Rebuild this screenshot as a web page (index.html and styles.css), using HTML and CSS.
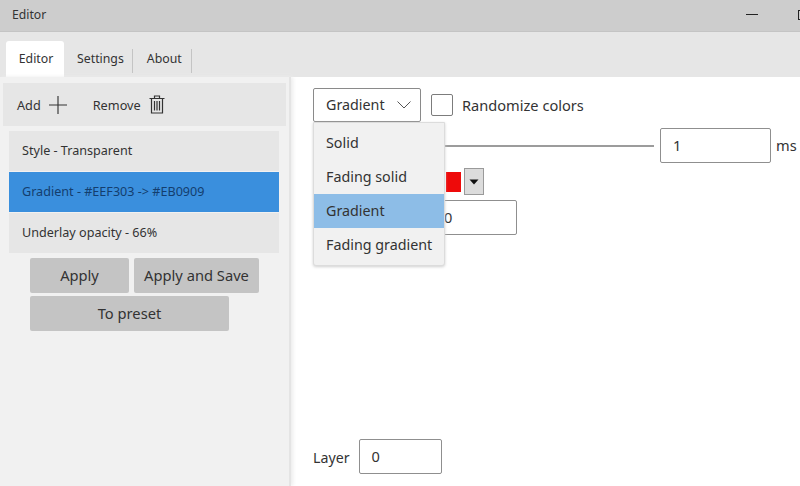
FILE: index.html
```html
<!DOCTYPE html>
<html lang="en">
<head>
<meta charset="utf-8">
<title>Editor</title>
<link rel="stylesheet" href="styles.css">
</head>
<body>
<div class="window">
  <header class="titlebar">
    <span class="title">Editor</span>
    <span class="win-controls"><span class="win-min"></span><span class="win-max"></span></span>
  </header>
  <nav class="tabs">
    <span class="tab active">Editor</span>
    <span class="tab sep">Settings</span>
    <span class="tab sep">About</span>
  </nav>
  <div class="content">
    <aside class="sidebar">
      <div class="toolbar">
        <span class="tool tool-add">Add
          <svg class="icon-plus" viewBox="0 0 19 19" width="18" height="18"><path d="M0 9.5H19M9.5 0V19" stroke="#333" stroke-width="1.2" fill="none"/></svg>
        </span>
        <span class="tool">Remove
          <svg class="icon-trash" viewBox="0 0 16 19" width="16" height="19"><path d="M0.5 3.5H15.5M5.5 3.5V1H10.5V3.5M2.5 3.5V18H13.5V3.5M5.5 6V15.5M8 6V15.5M10.5 6V15.5" stroke="#333" stroke-width="1.2" fill="none"/></svg>
        </span>
      </div>
      <ul class="list">
        <li class="item">Style - Transparent</li>
        <li class="item selected">Gradient - #EEF303 -&gt; #EB0909</li>
        <li class="item">Underlay opacity - 66%</li>
      </ul>
      <div class="actions">
        <button class="btn btn-apply">Apply</button>
        <button class="btn btn-save">Apply and Save</button>
        <button class="btn btn-preset">To preset</button>
      </div>
    </aside>
    <main class="main">
      <div class="row-top">
        <div class="combo">Gradient
          <svg viewBox="0 0 14 8" width="14" height="8"><path d="M0.5 0.5L7 7L13.5 0.5" stroke="#555" stroke-width="1" fill="none"/></svg>
        </div>
        <span class="checkbox"></span>
        <span class="check-label">Randomize colors</span>
      </div>
      <div class="row-slider">
        <span class="slider-line"></span>
        <span class="field field-ms">1</span>
        <span class="unit">ms</span>
      </div>
      <div class="row-color">
        <span class="swatch"></span>
        <span class="swatch-btn"><svg viewBox="0 0 10 6" width="10" height="6"><path d="M0.5 0.5H9.5L5 5.5Z" fill="#111"/></svg></span>
      </div>
      <div class="row-value">
        <span class="field field-value">0</span>
      </div>
      <div class="row-layer">
        <span class="layer-label">Layer</span>
        <span class="field field-layer">0</span>
      </div>
      <div class="dropdown">
        <div class="opt">Solid</div>
        <div class="opt">Fading solid</div>
        <div class="opt current">Gradient</div>
        <div class="opt">Fading gradient</div>
      </div>
    </main>
  </div>
</div>
</body>
</html>
```
FILE: styles.css
```css
* { box-sizing: border-box; }
html, body { margin: 0; padding: 0; }
body {
  width: 800px;
  height: 486px;
  overflow: hidden;
  font-family: "Noto Sans", "Open Sans", sans-serif;
  color: #333;
  background: #fff;
}
.window { display: flex; flex-direction: column; width: 800px; height: 486px; }
.titlebar {
  height: 32px;
  flex: none;
  background: #cdcdcd;
  display: flex;
  align-items: center;
  justify-content: space-between;
  padding: 0 0 2px 12px;
  font-size: 12.2px;
  border-bottom: 1px solid #c4c4c4;
}
.win-controls { display: flex; align-items: center; gap: 40px; margin-right: -10px; }
.win-min { width: 12px; height: 1px; background: #222; }
.win-max { width: 12px; height: 10px; border: 1px solid #222; }
.tabs {
  height: 45px;
  flex: none;
  background: #e6e6e6;
  display: flex;
  align-items: flex-end;
  padding-left: 6px;
  font-size: 12.3px;
}
.tab { height: 36px; display: flex; align-items: center; padding-bottom: 1px; }
.tab.active { width: 58px; padding-left: 2px; justify-content: center; background: #fff; border-radius: 3px 3px 0 0; }
.tab.sep { position: relative; padding: 0 9px 1px 13px; }
.tab.sep + .tab.sep { padding: 0 10px 1px 14px; }
.tab.sep::after { content: ""; position: absolute; right: 0; top: 8px; height: 24px; width: 1px; background: #c4c4c4; }
.content { flex: 1; display: flex; min-height: 0; }
.sidebar {
  width: 291px;
  flex: none;
  background: #f1f1f1;
  border-right: 2px solid #e4e4e4;
  box-shadow: 2px 0 4px #ececec;
  padding: 6px 0 0 3px;
}
.toolbar {
  width: 283px;
  height: 43px;
  background: #e6e6e6;
  display: flex;
  align-items: center;
  padding-left: 14px;
  gap: 26px;
  font-size: 12.7px;
}
.tool { display: flex; align-items: center; gap: 8px; }
.list { list-style: none; margin: 5px 0 0 6px; padding: 0; width: 270px; }
.item {
  height: 40px;
  margin-bottom: 1px;
  background: #e6e6e6;
  display: flex;
  align-items: center;
  padding: 0 0 2px 13px;
  font-size: 12.6px;
}
.item.selected { background: #3a8fdd; color: #143e6e; }
.actions {
  display: grid;
  grid-template-columns: 99px 125px;
  column-gap: 5px;
  row-gap: 3px;
  margin: 5px 0 0 27px;
}
.btn {
  height: 35px;
  border: 0;
  border-radius: 2px;
  background: #c4c4c4;
  color: #333;
  font: inherit;
  font-size: 14.7px;
  padding: 0 0 2px;
}
.btn-preset { grid-column: 1 / -1; width: 199px; }
.main {
  flex: 1;
  position: relative;
  display: flex;
  flex-direction: column;
  padding: 11px 0 12px 22px;
  font-size: 14.6px;
  min-width: 0;
}
.row-top { display: flex; align-items: center; height: 34px; }
.combo {
  width: 108px;
  height: 34px;
  border: 1px solid #8a8a8a;
  border-radius: 2px;
  display: flex;
  align-items: center;
  justify-content: space-between;
  padding: 0 9px 1px 12px;
  font-size: 14.3px;
}
.checkbox {
  width: 22px;
  height: 22px;
  margin-left: 10px;
  border: 1px solid #7c7c7c;
  border-radius: 2px;
}
.check-label { margin-left: 9px; padding-bottom: 1px; }
.row-slider { display: flex; align-items: center; margin-top: 6px; padding-left: 132px; }
.slider-line { width: 209px; height: 2px; background: #9c9c9c; margin-right: 6px; }
.field {
  display: flex;
  align-items: center;
  height: 35px;
  border: 1px solid #8f8f8f;
  border-radius: 2px;
  padding: 0 0 2px 12px;
  background: #fff;
}
.field-ms { width: 111px; }
.unit { margin-left: 5px; padding-bottom: 1px; }
.row-color { display: flex; align-items: center; margin-top: 5px; padding-left: 133px; height: 27px; }
.swatch { width: 15px; height: 20px; background: #ee0a0a; }
.swatch-btn {
  width: 20px;
  height: 27px;
  margin-left: 3px;
  background: #dcdcdc;
  border: 1px solid #9a9a9a;
  display: flex;
  align-items: center;
  justify-content: center;
}
.row-value { margin-top: 5px; padding-left: 117px; }
.field-value { width: 87px; padding-left: 13px; }
.row-layer { margin-top: auto; display: flex; align-items: center; gap: 9px; font-size: 14.2px; }
.layer-label { padding-top: 1px; }
.field-layer { width: 83px; font-size: 14.6px; }
.dropdown {
  position: absolute;
  left: 22px;
  top: 45px;
  width: 132px;
  height: 144px;
  padding: 3px 0 4px;
  background: #f1f1f1;
  border: 1px solid #dcdcdc;
  border-radius: 0 0 3px 3px;
  box-shadow: 0 1px 3px #d0d0d0;
  font-size: 14.3px;
}
.opt { height: 34px; display: flex; align-items: center; padding: 0 0 2px 12px; white-space: nowrap; }
.opt.current { background: #8dbde7; }
```
